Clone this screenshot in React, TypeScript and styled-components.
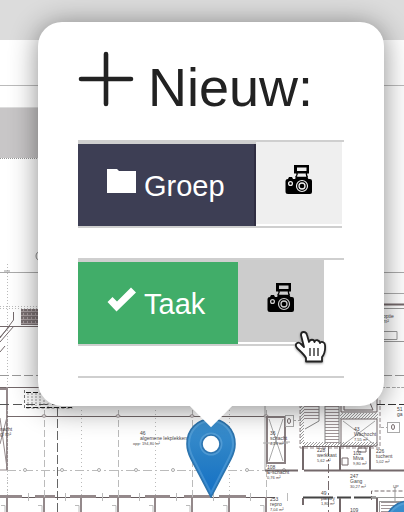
import React from "react";
import styled, { createGlobalStyle } from "styled-components";

const GlobalStyle = createGlobalStyle`
  * { box-sizing: border-box; }
  body { margin: 0; background: #fff; font-family: "Liberation Sans", Arial, Helvetica, sans-serif; }
`;

const Page = styled.div`
  display: grid;
  min-height: 100vh;
  overflow: hidden;
`;

const Backdrop = styled.div`
  grid-area: 1 / 1;
  display: flex;
  flex-direction: column;
`;

const TopBar = styled.header`
  height: 40px;
  background: #dcdcdc;
`;

const MapDrawing = styled.svg`
  display: block;
  width: 100%;
  flex: 1;
  min-height: 0;
`;

const Overlay = styled.main`
  grid-area: 1 / 1;
  display: flex;
  flex-direction: column;
  align-items: stretch;
  padding: 22px 20px 0 38px;
  z-index: 1;
`;

const Popup = styled.section`
  position: relative;
  z-index: 2;
  padding: 29px 40px 28px;
  border-radius: 24px;
  background: #fff;
  box-shadow: 0 3px 28px rgba(0, 0, 0, 0.46);
`;

const TipClip = styled.div`
  position: absolute;
  top: 100%;
  left: 50%;
  width: 80px;
  height: 40px;
  transform: translateX(-50%);
  overflow: hidden;
`;

const Tip = styled.div`
  width: 30px;
  height: 30px;
  margin: -15px auto 0;
  transform: rotate(45deg);
  background: #fff;
`;

const Heading = styled.h1`
  display: flex;
  align-items: flex-start;
  gap: 14px;
  height: 68px;
  margin: 0 0 21px;
  color: #222;
  font-size: 54px;
  font-weight: 400;
  line-height: 64px;
  white-space: nowrap;
`;

const HeadingText = styled.span`
  align-self: flex-end;
`;

const ActionList = styled.ul`
  margin: 0;
  padding: 0;
  list-style: none;
  border-bottom: 2px solid #cfcfcf;
`;

const ActionItem = styled.li`
  display: flex;
  align-items: flex-start;
  border-top: 2px solid #cfcfcf;
  padding-bottom: 30px;
`;

const ButtonPair = styled.div`
  display: flex;
  align-items: flex-start;
  border-bottom: 2px solid #cfcfcf;
`;

const MainButton = styled.button<{ $fill: string; $edge: string }>`
  display: flex;
  align-items: center;
  gap: 8px;
  min-width: 160px;
  height: 84px;
  padding: 2px 31px 0 29px;
  border: 0;
  border-top: 2px solid #cfcfcf;
  background: ${(p) => p.$fill};
  box-shadow: inset -2px 0 0 ${(p) => p.$edge};
  color: #fff;
  font-family: inherit;
  font-size: 29px;
  line-height: 34px;
  cursor: pointer;
`;

const ButtonIcon = styled.svg`
  width: 29px;
  height: 26px;
  flex: none;
  margin-bottom: 8px;
`;

const CameraButton = styled.button<{ $active?: boolean }>`
  display: flex;
  justify-content: center;
  align-items: center;
  width: 86px;
  height: 82px;
  padding: 0 0 6px;
  border: 0;
  color: ${(p) => (p.$active ? "#cccccc" : "#efefef")};
  background: ${(p) => (p.$active ? "#cccccc" : "#efefef")};
  cursor: pointer;
`;

const Pointer = styled.svg`
  position: absolute;
  right: 57px;
  bottom: 41px;
  width: 34px;
  height: 36px;
  filter: drop-shadow(0 1px 1px rgba(0, 0, 0, 0.4));
  pointer-events: none;
`;

const PinButton = styled.button`
  align-self: center;
  display: block;
  margin-top: 10px;
  padding: 0;
  border: 0;
  background: none;
  line-height: 0;
  cursor: pointer;
`;

const CameraIcon = () => (
  <svg width="28" height="30" viewBox="0 0 28 30" aria-hidden="true">
    <path d="M9 0h15v8.500H9zM12 2.500v3.500h9.500V2.500z" fillRule="evenodd" fill="#000" />
    <path d="M12 8v2l-1.500 2.500M21.500 8v2l1 2.500" fill="none" stroke="#000" strokeWidth="1.400" />
    <path d="M3 14l1-2h3l1 2h2l1.500-2.500h10.500L23.500 14h1.500q2 0 2 2v11q0 2-2 2H3q-2.500 0-2.500-2.500V16q0-2 2.500-2z" fill="#000" />
    <path d="M12.500 10h8.500v1.500h-8.500z" fill="currentColor" />
    <circle cx="5.500" cy="18.500" r="1.900" fill="none" stroke="currentColor" strokeWidth="1.300" />
    <circle cx="17" cy="21" r="5.500" fill="none" stroke="currentColor" strokeWidth="1.200" />
    <circle cx="17" cy="21" r="3" fill="none" stroke="currentColor" strokeWidth="1.300" />
  </svg>
);

const PinShape = () => (
  <g>
    <path d="M25 3C12 3 1 13 1 28c0 6 2 11 4 15l20 38 20-38c2-4 4-9 4-15C49 13 38 3 25 3z" fill="url(#pinFill)" stroke="#2d74ad" strokeWidth="1.600" />
    <path d="M25 5C13 5 3 14 3 28c0 6 2 10 4 14l18 35 18-35c2-4 4-8 4-14C47 14 37 5 25 5z" fill="none" stroke="#7dbbe6" strokeOpacity=".35" strokeWidth="2" />
    <circle cx="25" cy="28" r="10.500" fill="none" stroke="#6fb0e0" strokeOpacity=".5" strokeWidth="2" />
    <circle cx="25" cy="28" r="9" fill="#fff" stroke="#2d75b1" strokeWidth="1.600" />
  </g>
);

const columns = [7, 44, 81, 118, 155, 192, 229, 266];

type Label = { x: number; y: number; lines: string[] };
const labels: Label[] = [
  { x: 140, y: 435, lines: ["46", "algemene lekplekken"] },
  { x: 270, y: 435, lines: ["36", "schacht", "4,28 m²"] },
  { x: 267, y: 469, lines: ["108", "E-schacht", "0,76 m²"] },
  { x: 317, y: 452, lines: ["228", "werkkast", "5,62 m²"] },
  { x: 354, y: 431, lines: ["43", "Wachocht", "7,55 m²"] },
  { x: 353, y: 455, lines: ["102", "Miva", "9,80 m²"] },
  { x: 376, y: 453, lines: ["226", "tuchent", "5,02 m²"] },
  { x: 350, y: 478, lines: ["247", "Gang", "30,27 m²"] },
  { x: 321, y: 495, lines: ["49", "pantry", "1,80 m²"] },
  { x: 270, y: 501, lines: ["253", "repro", "7,04 m²"] },
  { x: 397, y: 411, lines: ["51", "ga"] },
  { x: 350, y: 512, lines: ["109"] },
  { x: 383, y: 318, lines: ["optie", "m²"] },
];

const FloorPlan = () => (
  <MapDrawing viewBox="0 40 404 472" preserveAspectRatio="xMinYMin slice" aria-hidden="true">
    <defs>
      <pattern id="hatch" width="3" height="3" patternUnits="userSpaceOnUse">
        <path d="M0 3 3 0" stroke="#777" strokeWidth=".7" />
      </pattern>
      <pattern id="grille" width="4" height="4" patternUnits="userSpaceOnUse">
        <path d="M0 0h4M0 2h3" stroke="#5c5254" strokeWidth="1.5" />
      </pattern>
    </defs>
    <rect y="40" width="404" height="472" fill="#fff" />
    <path d="M0 85.500h404" stroke="#bbb" />
    <rect y="107" width="60" height="51" fill="#c8c6c7" />
    <path d="M0 107.500h60" stroke="#ddd" />
    <path d="M0 158.500h60" stroke="#999" strokeDasharray="1 1" />
    <circle cx="41" cy="256" r="5" fill="none" stroke="#888" />

    <g fill="none" stroke="#aaa">
      <path d="M0 272.500h40M383 272.500h21M383 293.500h21" />
      <path d="M0 306.500h40M0 308.500h40M7.500 264v248M383 387.500h21" strokeDasharray="1 2" stroke="#bbb" />
      <path d="M4 271h6" stroke="#999" />
      <path d="M0 375.500h40M383 375.500h21" strokeDasharray="9 3" stroke="#999" />
    </g>
    <rect x="21" y="309" width="24" height="16" fill="#aaa0a2" />
    <rect x="21" y="309" width="24" height="16" fill="url(#grille)" opacity=".8" />
    <g fill="none" stroke="#74696b">
      <path d="M0 326.500h40M0 387.500h48" />
      <path d="M13.500 312v8L0 338M14 326 0 342M10 326 0 337M5 346 0 352" />
      <path d="M383 304.500h21" strokeWidth="2" />
      <path d="M383 308.500h21M380 331.500h17v8h-17M383 341.500h21" stroke="#999" />
    </g>

    <g fill="none" stroke="#94898b">
      <path d="M0 470h8M0 418l7 50M0 444l7-27" />
      <path d="M7 387v83M0 389h7" strokeWidth="2" />
      <path d="M7 416.500h260" stroke="#74696b" />
      <path d="M7 470.500h260" stroke="#bbb" strokeDasharray="9 3 2 3" />
      <path d="M0 404.500h57" stroke="#555" strokeDasharray="9 4" />
      <path d="M57.500 407v105" stroke="#666" strokeDasharray="9 3" />
      <path d="M24.500 390v18h48" stroke="#777" strokeDasharray="3 2" />
      <path d="M26 392.500h14M26 407.500h46" stroke="#222" strokeDasharray="5 2" />
      <path d="M28 393v13M32 393v13M36 393v13M40 393v13M44 400v6M48 403v4" stroke="#999" strokeDasharray="2 1" />
      <path d="M0 497.500h275" stroke="#655b5d" />
      <path d="M0 496.500h22M35 496.500h20M70 496.500h26M109 496.500h22M145 496.500h25M184 496.500h27M219 496.500h27" stroke="#94898b" strokeWidth="3" />
    </g>
    {columns.map((x, i) => (
      <g key={x} fill="none" stroke="#94898b">
        <path d={`M${x + 0.5} 410v88`} stroke="#bbb" strokeDasharray={i % 2 ? "7 3" : "1 3"} />
        <path d={`M${x} 497v15`} strokeWidth="2" />
        <path d={`M${x - 6} 505.500h4v7M${x + 21.5} 493v8`} stroke="#bbb" />
        {i % 2 === 1 && <ellipse cx={x} cy="416" rx="2" ry="1.200" fill="#fff" />}
        <circle cx={x + 18} cy="470" r="1.500" fill="#fff" stroke="#aaa" />
      </g>
    ))}

    <g fill="none" stroke="#74696b">
      <rect x="267" y="417" width="18" height="46" strokeWidth="2" stroke="#8a8082" />
      <path d="M269 419l14 42M283 419l-14 42M263 443h25M265 398v72M285 442h5" stroke="#aaa" />
      <path d="M265 470.500h33M304 470.500h77M303 446v24M340 446v24M370 446v24M376 470.500h28" strokeWidth="2" />
      <path d="M303 446.500h70" />
      <path d="M300 398v50h80v-50" stroke="#94898b" strokeDasharray="4 2" />
      <path d="M328.500 447v68" strokeDasharray="9 3 2 3" />
      <path d="M341 398v14h36v-14M344 398v12h29l-5-12" />
      <rect x="341" y="419" width="36" height="27" />
      <path d="M343 421l32 24M375 421l-32 24" stroke="#aaa" />
      <path d="M377 404.500h27" stroke="#333" strokeDasharray="8 3" />
      <rect x="387.500" y="422.500" width="12" height="10" stroke="#aaa" />
      <rect x="285.500" y="415.500" width="8" height="11" stroke="#aaa" />
      <ellipse cx="393" cy="427" rx="1.500" ry="2.500" />
      <ellipse cx="289" cy="421" rx="1.500" ry="2.500" />
      <path d="M293 420.500h8M381 427.500h6M382 387.500h22" stroke="#aaa" strokeDasharray="3 2" />
      <path d="M303 497.500h73" strokeWidth="2" stroke="#444" strokeDasharray="30 4 14 3" />
      <path d="M303 498v7M340 498v14M377 498v14" strokeWidth="2" />
      <path d="M371.500 500v-9h33" strokeDasharray="4 2" />
      <path d="M371 497.500h33M379 501.500h25M395 487v16M379.500 502v10" stroke="#999" />
      <path d="M342 458h6v7h-6zM358 448h8v4h-8z" />
    </g>
    <rect x="303" y="442" width="75" height="5" fill="url(#hatch)" />
    <rect x="340" y="413" width="38" height="6" fill="url(#hatch)" />
    <rect x="300" y="406" width="4" height="38" fill="url(#hatch)" />
    {Array.from({ length: 14 }, (_, i) => (
      <path key={i} d={`M325 ${403.5 + i * 3}h14${i < 6 ? `M304 ${403.5 + i * 3}h15` : ""}${i < 4 ? `M381 ${502.5 + i * 3}h18` : ""}`} stroke="#a09698" strokeWidth="1" />
    ))}
    <path d="M319 403v18l-14 8M325 403v41M339 403v41" fill="none" stroke="#888" />

    <g fill="#4a4547" fontSize="5" fontFamily="Liberation Sans, Arial, sans-serif">
      {labels.map((l) =>
        l.lines.map((t, i) => (
          <text key={t + i} x={l.x} y={l.y + i * 5} fontSize={i === 2 ? 4 : 5}>{t}</text>
        ))
      )}
      <text x="133" y="445" fontSize="4">opp: 194,80 m²</text>
      <text x="0" y="431">nacht</text>
      <text x="0" y="436">gl m²</text>
      <text x="393" y="488" fontSize="4">UP</text>
    </g>
    <g transform="translate(384 498)"><PinShape /></g>
  </MapDrawing>
);

export default function App() {
  return (
    <Page>
      <GlobalStyle />
      <Backdrop>
        <TopBar />
        <FloorPlan />
      </Backdrop>
      <Overlay>
        <Popup aria-labelledby="popup-title">
          <Heading id="popup-title">
            <svg width="56" height="56" viewBox="0 0 56 56" aria-hidden="true">
              <path d="M3 28h50M28 3v50" stroke="#222" strokeWidth="4.600" strokeLinecap="round" />
            </svg>
            <HeadingText>Nieuw:</HeadingText>
          </Heading>
          <ActionList>
            <ActionItem>
              <ButtonPair>
                <MainButton type="button" $fill="#3d3e54" $edge="#302e42">
                  <ButtonIcon viewBox="0 0 29 26" aria-hidden="true">
                    <path d="M0 0h10l2 2h17v22H0z" fill="#fff" />
                  </ButtonIcon>
                  Groep
                </MainButton>
                <CameraButton type="button" aria-label="Groep met foto"><CameraIcon /></CameraButton>
              </ButtonPair>
            </ActionItem>
            <ActionItem>
              <ButtonPair>
                <MainButton type="button" $fill="#41ad69" $edge="#41ad69">
                  <ButtonIcon viewBox="0 0 29 26" aria-hidden="true">
                    <path d="M0.500 15l5-5 4.500 4.500L24 0.500l5 5L9.500 24.500z" fill="#fff" />
                  </ButtonIcon>
                  Taak
                </MainButton>
                <CameraButton type="button" aria-label="Taak met foto" $active><CameraIcon /></CameraButton>
              </ButtonPair>
            </ActionItem>
          </ActionList>
          <Pointer viewBox="0 0 34 36" aria-hidden="true">
            <path d="M8 6c0-4 5-4 6 0l2 7c1-3 5-3 5.500 0 1-3 5-2 5.500 1 1-2 5-1 5 2 .5 5-.5 9-3 12v4.500H13V29c-2-4-6-7-9-10-3-4 1-7 4-4l3 3z" fill="#fff" stroke="#222" strokeWidth="1.800" strokeLinejoin="round" />
            <path d="M17 19v8M21 19v8M25 19v8" stroke="#333" strokeWidth="1.400" />
          </Pointer>
          <TipClip><Tip /></TipClip>
        </Popup>
        <PinButton type="button" aria-label="Locatie">
          <svg width="50" height="82" viewBox="0 0 50 82" aria-hidden="true">
            <defs>
              <linearGradient id="pinFill" x1="0" y1="0" x2="0" y2="1">
                <stop offset="0" stopColor="#3d91cf" />
                <stop offset=".5" stopColor="#287fc5" />
                <stop offset="1" stopColor="#126fc6" />
              </linearGradient>
            </defs>
            <PinShape />
          </svg>
        </PinButton>
      </Overlay>
    </Page>
  );
}
